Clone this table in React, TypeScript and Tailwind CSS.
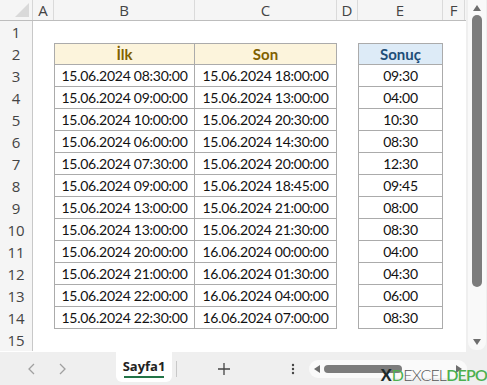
import React from 'react';

const cols = [
  { key: 'A', w: 'w-[21px]' },
  { key: 'B', w: 'w-[141px]' },
  { key: 'C', w: 'w-[142px]' },
  { key: 'D', w: 'w-[21px]' },
  { key: 'E', w: 'w-[85px]' },
  { key: 'F', w: 'w-[22px]' },
];

const rows: [string, string, string][] = [
  ['15.06.2024 08:30:00', '15.06.2024 18:00:00', '09:30'],
  ['15.06.2024 09:00:00', '15.06.2024 13:00:00', '04:00'],
  ['15.06.2024 10:00:00', '15.06.2024 20:30:00', '10:30'],
  ['15.06.2024 06:00:00', '15.06.2024 14:30:00', '08:30'],
  ['15.06.2024 07:30:00', '15.06.2024 20:00:00', '12:30'],
  ['15.06.2024 09:00:00', '15.06.2024 18:45:00', '09:45'],
  ['15.06.2024 13:00:00', '15.06.2024 21:00:00', '08:00'],
  ['15.06.2024 13:00:00', '15.06.2024 21:30:00', '08:30'],
  ['15.06.2024 20:00:00', '16.06.2024 00:00:00', '04:00'],
  ['15.06.2024 21:00:00', '16.06.2024 01:30:00', '04:30'],
  ['15.06.2024 22:00:00', '16.06.2024 04:00:00', '06:00'],
  ['15.06.2024 22:30:00', '16.06.2024 07:00:00', '08:30'],
];

function RowHead({ n }: { n: number }) {
  return (
    <div className="w-[33px] h-[22px] shrink-0 bg-[#f5f5f5] border-r border-[#c8c8c8] flex items-center justify-center text-[15px] text-[#444]">
      {n}
    </div>
  );
}

function Cell({ w, className = '', children }: { w: string; className?: string; children?: React.ReactNode }) {
  return (
    <div className={`${w} h-[22px] shrink-0 flex items-center justify-center ${className}`}>
      {children}
    </div>
  );
}

function Sheet() {
  const data = "font-['Lato',sans-serif] text-[14px] tracking-[-0.25px] text-[#111] border-[#ababab] border-b border-r";
  const head = "font-['Lato',sans-serif] text-[15px] font-bold border-[#ababab] border-y border-r";
  return (
    <div className="w-[466px] h-[352px] bg-white flex flex-col font-['Open_Sans',sans-serif]">
      <div className="flex h-[21px] border-b border-[#bdbdbd] bg-[#f5f5f5]">
        <div className="w-[33px] h-full shrink-0 relative border-r border-[#d6d6d6]">
          <svg className="absolute right-[3px] bottom-[3px]" width="14" height="14">
            <polygon points="14,0 14,14 0,14" fill="#d9d9d9" />
          </svg>
        </div>
        {cols.map((c) => (
          <div
            key={c.key}
            className={`${c.w} shrink-0 h-full border-r border-[#dadada] flex items-center justify-center text-[15px] text-[#444]`}
          >
            {c.key}
          </div>
        ))}
      </div>
      <div className="flex">
        <RowHead n={1} />
      </div>
      <div className="flex">
        <RowHead n={2} />
        <Cell w="w-[21px]" />
        <Cell w="w-[141px]" className={`${head} border-l bg-[#fcf4dc] text-[#7f6000]`}>İlk</Cell>
        <Cell w="w-[142px]" className={`${head} bg-[#fcf4dc] text-[#7f6000]`}>Son</Cell>
        <Cell w="w-[21px]" />
        <Cell w="w-[85px]" className={`${head} border-l bg-[#ddebf7] text-[#1f4e78]`}>Sonuç</Cell>
      </div>
      {rows.map((r, i) => (
        <div key={i} className="flex">
          <RowHead n={i + 3} />
          <Cell w="w-[21px]" />
          <Cell w="w-[141px]" className={`${data} border-l`}>{r[0]}</Cell>
          <Cell w="w-[142px]" className={data}>{r[1]}</Cell>
          <Cell w="w-[21px]" />
          <Cell w="w-[85px]" className={`${data} border-l`}>{r[2]}</Cell>
        </div>
      ))}
      <div className="flex">
        <RowHead n={15} />
      </div>
    </div>
  );
}

function VScroll() {
  return (
    <div className="w-[21px] h-[352px] bg-[#efefef] pl-[2px] pr-[1px] pb-[2px]">
      <div className="h-full rounded-b-[8px] bg-[#f9f9f9] flex flex-col items-center pt-[4px] pb-[4px]">
        <svg width="10" height="8"><polygon points="5,1 9,7 1,7" fill="#6e6e6e" /></svg>
        <div className="w-[10px] h-[272px] mt-[3px] rounded-full bg-[#7c7c7c]" />
        <div className="flex-1" />
        <svg width="10" height="8"><polygon points="1,1 9,1 5,7" fill="#6e6e6e" /></svg>
      </div>
    </div>
  );
}

function TabBar() {
  return (
    <div className="relative h-[33px] bg-[#efefef] flex items-start font-['Open_Sans',sans-serif]">
      <div className="w-[116px] h-full flex items-center pl-[26px] gap-[18px]">
        <svg width="12" height="14"><polyline points="8,2 3,7 8,12" fill="none" stroke="#a0a0a0" strokeWidth="1.3" /></svg>
        <svg width="12" height="14"><polyline points="4,2 9,7 4,12" fill="none" stroke="#a0a0a0" strokeWidth="1.3" /></svg>
      </div>
      <div className="w-[56px] h-[30px] bg-white rounded-b-[6px] flex flex-col items-center justify-center">
        <span className="text-[13px] font-bold text-[#222] leading-[18px]">Sayfa1</span>
        <div className="w-[40px] h-[2px] bg-[#217346] mt-[1px]" />
      </div>
      <div className="w-px h-[16px] bg-[#c8c8c8] mt-[9px] ml-[4px]" />
      <div className="ml-[40px] h-full flex items-center">
        <svg width="14" height="14"><path d="M7 1v12M1 7h12" stroke="#444" strokeWidth="1.3" /></svg>
      </div>
      <div className="ml-[60px] h-full flex items-center">
        <svg width="4" height="14">
          <circle cx="2" cy="3" r="1.2" fill="#444" />
          <circle cx="2" cy="7" r="1.2" fill="#444" />
          <circle cx="2" cy="11" r="1.2" fill="#444" />
        </svg>
      </div>
      <div className="ml-[14px] mt-[8px] w-[158px] h-[18px] rounded-full bg-[#fafafa] flex items-center px-[4px]">
        <svg width="8" height="10"><polygon points="1,5 7,1 7,9" fill="#6e6e6e" /></svg>
        <div className="ml-[3px] w-[78px] h-[8px] rounded-full bg-[#7c7c7c]" />
        <div className="flex-1" />
        <svg width="8" height="10"><polygon points="7,5 1,1 1,9" fill="#6e6e6e" /></svg>
      </div>
      <div className="absolute right-0 bottom-[1px] flex items-end font-['Lato',sans-serif] text-[16px] leading-[18px] tracking-[-0.8px]">
        <span className="font-black text-[#1d2b2b] mr-[1px]">X</span>
        <span className="text-[#4cb04f]">D</span>
        <span className="text-[#555] font-light">EXCEL</span>
        <span className="text-[#4cb04f] font-semibold">DEPO</span>
      </div>
    </div>
  );
}

function App() {
  return (
    <div className="w-[487px] h-[385px] overflow-hidden bg-[#efefef]">
      <div className="flex">
        <Sheet />
        <VScroll />
      </div>
      <TabBar />
    </div>
  );
}

export default App;
